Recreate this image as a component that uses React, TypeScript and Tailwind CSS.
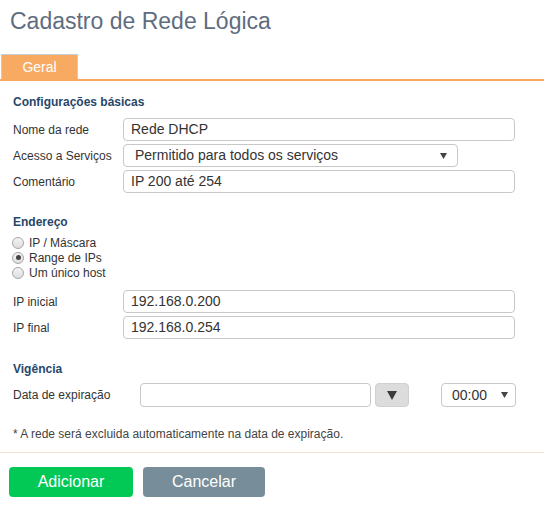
import React from "react";

function Radio({ checked, label }: { checked?: boolean; label: string }) {
  return (
    <div className="flex items-center h-[15px] text-[12px] text-[#333]">
      <span className="ml-[12px] mr-[5px] w-[12px] h-[12px] rounded-full border border-[#a6a6a6] bg-gradient-to-b from-[#f4f4f4] to-[#dedede] flex items-center justify-center">
        {checked && <span className="w-[5px] h-[5px] rounded-full bg-[#444]" />}
      </span>
      <span>{label}</span>
    </div>
  );
}

function Row({ label, children }: { label: string; children: React.ReactNode }) {
  return (
    <div className="flex items-center h-[23px]">
      <div className="w-[110px] text-[12px] text-[#333]">{label}</div>
      {children}
    </div>
  );
}

function TextInput({ value, width }: { value: string; width: string }) {
  return (
    <div className={`${width} h-[23px] border border-[#c8c8c8] rounded-[4px] flex items-center pl-[7px] text-[14px] text-[#333]`}>
      {value}
    </div>
  );
}

function Caret() {
  return (
    <svg width="7" height="6" viewBox="0 0 7 6">
      <path d="M0 0 L7 0 L3.5 6 Z" fill="#444" />
    </svg>
  );
}

export default function App() {
  return (
    <div className="w-[544px] h-[524px] bg-white font-['Liberation_Sans',Arial,sans-serif]">
      <h1 className="pt-[8px] pl-[10px] text-[23px] leading-[26px] text-[#5f6d7f]">
        Cadastro de Rede Lógica
      </h1>
      <div className="mt-[20px] pl-[1px]">
        <div className="w-[77px] h-[25px] border border-b-0 border-[#c5ccd3] bg-[#f8aa63] text-white text-[14px] flex items-center justify-center">
          Geral
        </div>
      </div>
      <div className="h-[2px] bg-[#f8aa63]" />

      <div className="pl-[13px]">
        <div className="mt-[14px] text-[12px] leading-[14px] font-bold text-[#27476a]">
          Configurações básicas
        </div>
        <div className="mt-[9px] flex flex-col gap-[3px]">
          <Row label="Nome da rede">
            <TextInput value="Rede DHCP" width="w-[392px]" />
          </Row>
          <Row label="Acesso a Serviços">
            <div className="w-[335px] h-[23px] border border-[#c8c8c8] rounded-[4px] flex items-center justify-between pl-[11px] pr-[10px] text-[14px] text-[#333]">
              <span>Permitido para todos os serviços</span>
              <Caret />
            </div>
          </Row>
          <Row label="Comentário">
            <TextInput value="IP 200 até 254" width="w-[392px]" />
          </Row>
        </div>

        <div className="mt-[22px] text-[12px] leading-[14px] font-bold text-[#27476a]">Endereço</div>
        <div className="mt-[6px] -ml-[13px] flex flex-col">
          <Radio label="IP / Máscara" />
          <Radio label="Range de IPs" checked />
          <Radio label="Um único host" />
        </div>

        <div className="mt-[10px] flex flex-col gap-[3px]">
          <Row label="IP inicial">
            <TextInput value="192.168.0.200" width="w-[392px]" />
          </Row>
          <Row label="IP final">
            <TextInput value="192.168.0.254" width="w-[392px]" />
          </Row>
        </div>

        <div className="mt-[23px] text-[12px] leading-[14px] font-bold text-[#27476a]">Vigência</div>
        <div className="mt-[7px] flex items-center h-[24px]">
          <div className="w-[127px] text-[12px] text-[#333]">Data de expiração</div>
          <div className="w-[231px] h-[24px] border border-[#c8c8c8] rounded-[4px]" />
          <div className="ml-[4px] w-[34px] h-[24px] rounded-[4px] bg-[#dcdcdc] border border-[#d0d0d0] flex items-center justify-center">
            <svg width="10" height="9" viewBox="0 0 10 9">
              <path d="M0 0 L10 0 L5 9 Z" fill="#3a3a3a" />
            </svg>
          </div>
          <div className="ml-[32px] w-[75px] h-[24px] border border-[#c8c8c8] rounded-[4px] flex items-center justify-between pl-[10px] pr-[7px] text-[14px] text-[#333]">
            <span>00:00</span>
            <Caret />
          </div>
        </div>

        <div className="mt-[20px] text-[12px] leading-[14px] text-[#444]">
          * A rede será excluida automaticamente na data de expiração.
        </div>
      </div>

      <div className="mt-[11px] h-[1px] bg-[#f6dfcc]" />

      <div className="mt-[14px] pl-[9px] flex gap-[10px]">
        <button className="w-[124px] h-[30px] rounded-[4px] bg-[#02c955] text-white text-[16px]">Adicionar</button>
        <button className="w-[122px] h-[30px] rounded-[4px] bg-[#778e9a] text-white text-[16px]">Cancelar</button>
      </div>
    </div>
  );
}
